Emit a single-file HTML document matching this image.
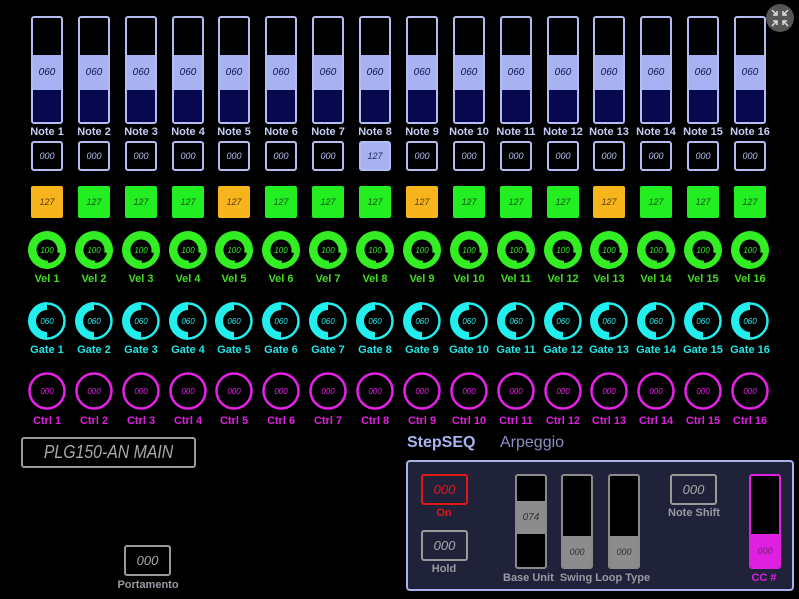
<!DOCTYPE html>
<html><head><meta charset="utf-8"><style>
*{margin:0;padding:0;box-sizing:border-box}
body{width:799px;height:599px;background:#000;position:relative;overflow:hidden;font-family:"Liberation Sans",sans-serif}
.c{position:absolute;top:0;width:32px;height:440px}
.sl{position:absolute;left:0;top:16px;width:32px;height:108px;border:2px solid #b4bcf0;border-radius:3px;background:#000;overflow:hidden}
.sl .b{position:absolute;left:0;top:37px;width:28px;height:35px;background:#a8b2f2;color:#10124a;font-style:italic;font-size:10px;text-align:center;line-height:35px}
.sl .n{position:absolute;left:0;top:72px;width:28px;height:34px;background:#07084e}
.lb{position:absolute;left:-20px;width:72px;text-align:center;font-weight:bold;font-size:11px}
.nl{top:126px;color:#c4ccf4}
.bx{position:absolute;left:0;top:141px;width:32px;height:30px;border:2px solid #b4bcf0;border-radius:3px;color:#b4bcf0;font-style:italic;font-size:9px;text-align:center;line-height:26px}
.bx.on{background:#a8b2f2;color:#20245a}
.sq{position:absolute;left:0;top:186px;width:32px;height:32px;border-radius:2px;background:#22ee22;color:#105010;font-style:italic;font-size:9px;text-align:center;line-height:32px}
.sq.o{background:#f8b41c;color:#5a3a00}
svg.k{position:absolute;left:-4px;width:40px;height:40px}
.v{top:230px}.g{top:301px}.t{top:371px}
.vl{top:273px;color:#44dd22}.gl{top:344px;color:#22e6e6}.tl{top:415px;color:#e020e0}
.lcd{position:absolute;border:2px solid #9a9a9a;border-radius:3px;color:#a8a8a8;font-style:italic;text-align:center}
.gl2{position:absolute;font-weight:bold;font-size:11px;color:#9a9aa4;text-align:center}
.vs{position:absolute;width:32px;height:95px;border:2px solid #8a8a8a;border-radius:3px;background:#000;overflow:hidden}
</style></head><body>
<svg width="0" height="0" style="position:absolute"><defs>
<g id="kv"><circle cx="20" cy="20" r="19" fill="#33ee22"/><circle cx="20" cy="20" r="10.5" fill="#000"/><path d="M20,20 L33,23 A13,13 0 0 1 21,33 Z" fill="#000"/><text x="20" y="23" font-size="8" font-style="italic" fill="#33ee22" text-anchor="middle" font-family="Liberation Sans">100</text></g>
<g id="kg"><circle cx="20" cy="20" r="17.5" fill="none" stroke="#22eeee" stroke-width="2.5"/><path d="M20,1 A19,19 0 0 0 20,39 L20,31 A11,11 0 0 1 20,9 Z" fill="#22eeee"/><text x="20" y="23" font-size="8" font-style="italic" fill="#22eeee" text-anchor="middle" font-family="Liberation Sans">060</text></g>
<g id="kc"><circle cx="20" cy="20" r="17.5" fill="none" stroke="#e820e8" stroke-width="2.5"/><text x="20" y="23" font-size="8" font-style="italic" fill="#e820e8" text-anchor="middle" font-family="Liberation Sans">000</text></g>
</defs></svg>

<div class="c" style="left:31px"><div class="sl"><div class="b">060</div><div class="n"></div></div><div class="lb nl">Note 1</div><div class="bx">000</div><div class="sq o">127</div><svg class="k v"><use href="#kv"/></svg><div class="lb vl">Vel 1</div><svg class="k g"><use href="#kg"/></svg><div class="lb gl">Gate 1</div><svg class="k t"><use href="#kc"/></svg><div class="lb tl">Ctrl 1</div></div>
<div class="c" style="left:78px"><div class="sl"><div class="b">060</div><div class="n"></div></div><div class="lb nl">Note 2</div><div class="bx">000</div><div class="sq">127</div><svg class="k v"><use href="#kv"/></svg><div class="lb vl">Vel 2</div><svg class="k g"><use href="#kg"/></svg><div class="lb gl">Gate 2</div><svg class="k t"><use href="#kc"/></svg><div class="lb tl">Ctrl 2</div></div>
<div class="c" style="left:125px"><div class="sl"><div class="b">060</div><div class="n"></div></div><div class="lb nl">Note 3</div><div class="bx">000</div><div class="sq">127</div><svg class="k v"><use href="#kv"/></svg><div class="lb vl">Vel 3</div><svg class="k g"><use href="#kg"/></svg><div class="lb gl">Gate 3</div><svg class="k t"><use href="#kc"/></svg><div class="lb tl">Ctrl 3</div></div>
<div class="c" style="left:172px"><div class="sl"><div class="b">060</div><div class="n"></div></div><div class="lb nl">Note 4</div><div class="bx">000</div><div class="sq">127</div><svg class="k v"><use href="#kv"/></svg><div class="lb vl">Vel 4</div><svg class="k g"><use href="#kg"/></svg><div class="lb gl">Gate 4</div><svg class="k t"><use href="#kc"/></svg><div class="lb tl">Ctrl 4</div></div>
<div class="c" style="left:218px"><div class="sl"><div class="b">060</div><div class="n"></div></div><div class="lb nl">Note 5</div><div class="bx">000</div><div class="sq o">127</div><svg class="k v"><use href="#kv"/></svg><div class="lb vl">Vel 5</div><svg class="k g"><use href="#kg"/></svg><div class="lb gl">Gate 5</div><svg class="k t"><use href="#kc"/></svg><div class="lb tl">Ctrl 5</div></div>
<div class="c" style="left:265px"><div class="sl"><div class="b">060</div><div class="n"></div></div><div class="lb nl">Note 6</div><div class="bx">000</div><div class="sq">127</div><svg class="k v"><use href="#kv"/></svg><div class="lb vl">Vel 6</div><svg class="k g"><use href="#kg"/></svg><div class="lb gl">Gate 6</div><svg class="k t"><use href="#kc"/></svg><div class="lb tl">Ctrl 6</div></div>
<div class="c" style="left:312px"><div class="sl"><div class="b">060</div><div class="n"></div></div><div class="lb nl">Note 7</div><div class="bx">000</div><div class="sq">127</div><svg class="k v"><use href="#kv"/></svg><div class="lb vl">Vel 7</div><svg class="k g"><use href="#kg"/></svg><div class="lb gl">Gate 7</div><svg class="k t"><use href="#kc"/></svg><div class="lb tl">Ctrl 7</div></div>
<div class="c" style="left:359px"><div class="sl"><div class="b">060</div><div class="n"></div></div><div class="lb nl">Note 8</div><div class="bx on">127</div><div class="sq">127</div><svg class="k v"><use href="#kv"/></svg><div class="lb vl">Vel 8</div><svg class="k g"><use href="#kg"/></svg><div class="lb gl">Gate 8</div><svg class="k t"><use href="#kc"/></svg><div class="lb tl">Ctrl 8</div></div>
<div class="c" style="left:406px"><div class="sl"><div class="b">060</div><div class="n"></div></div><div class="lb nl">Note 9</div><div class="bx">000</div><div class="sq o">127</div><svg class="k v"><use href="#kv"/></svg><div class="lb vl">Vel 9</div><svg class="k g"><use href="#kg"/></svg><div class="lb gl">Gate 9</div><svg class="k t"><use href="#kc"/></svg><div class="lb tl">Ctrl 9</div></div>
<div class="c" style="left:453px"><div class="sl"><div class="b">060</div><div class="n"></div></div><div class="lb nl">Note 10</div><div class="bx">000</div><div class="sq">127</div><svg class="k v"><use href="#kv"/></svg><div class="lb vl">Vel 10</div><svg class="k g"><use href="#kg"/></svg><div class="lb gl">Gate 10</div><svg class="k t"><use href="#kc"/></svg><div class="lb tl">Ctrl 10</div></div>
<div class="c" style="left:500px"><div class="sl"><div class="b">060</div><div class="n"></div></div><div class="lb nl">Note 11</div><div class="bx">000</div><div class="sq">127</div><svg class="k v"><use href="#kv"/></svg><div class="lb vl">Vel 11</div><svg class="k g"><use href="#kg"/></svg><div class="lb gl">Gate 11</div><svg class="k t"><use href="#kc"/></svg><div class="lb tl">Ctrl 11</div></div>
<div class="c" style="left:547px"><div class="sl"><div class="b">060</div><div class="n"></div></div><div class="lb nl">Note 12</div><div class="bx">000</div><div class="sq">127</div><svg class="k v"><use href="#kv"/></svg><div class="lb vl">Vel 12</div><svg class="k g"><use href="#kg"/></svg><div class="lb gl">Gate 12</div><svg class="k t"><use href="#kc"/></svg><div class="lb tl">Ctrl 12</div></div>
<div class="c" style="left:593px"><div class="sl"><div class="b">060</div><div class="n"></div></div><div class="lb nl">Note 13</div><div class="bx">000</div><div class="sq o">127</div><svg class="k v"><use href="#kv"/></svg><div class="lb vl">Vel 13</div><svg class="k g"><use href="#kg"/></svg><div class="lb gl">Gate 13</div><svg class="k t"><use href="#kc"/></svg><div class="lb tl">Ctrl 13</div></div>
<div class="c" style="left:640px"><div class="sl"><div class="b">060</div><div class="n"></div></div><div class="lb nl">Note 14</div><div class="bx">000</div><div class="sq">127</div><svg class="k v"><use href="#kv"/></svg><div class="lb vl">Vel 14</div><svg class="k g"><use href="#kg"/></svg><div class="lb gl">Gate 14</div><svg class="k t"><use href="#kc"/></svg><div class="lb tl">Ctrl 14</div></div>
<div class="c" style="left:687px"><div class="sl"><div class="b">060</div><div class="n"></div></div><div class="lb nl">Note 15</div><div class="bx">000</div><div class="sq">127</div><svg class="k v"><use href="#kv"/></svg><div class="lb vl">Vel 15</div><svg class="k g"><use href="#kg"/></svg><div class="lb gl">Gate 15</div><svg class="k t"><use href="#kc"/></svg><div class="lb tl">Ctrl 15</div></div>
<div class="c" style="left:734px"><div class="sl"><div class="b">060</div><div class="n"></div></div><div class="lb nl">Note 16</div><div class="bx">000</div><div class="sq">127</div><svg class="k v"><use href="#kv"/></svg><div class="lb vl">Vel 16</div><svg class="k g"><use href="#kg"/></svg><div class="lb gl">Gate 16</div><svg class="k t"><use href="#kc"/></svg><div class="lb tl">Ctrl 16</div></div>

<svg style="position:absolute;left:764px;top:2px" width="32" height="32"><circle cx="16" cy="16" r="14" fill="#555"/><g stroke="#ddd" stroke-width="1.5" fill="none"><path d="M8,8 L13,13 M13,9 V13 H9"/><path d="M24,8 L19,13 M19,9 V13 H23"/><path d="M8,24 L13,19 M13,23 V19 H9"/><path d="M24,24 L19,19 M19,23 V19 H23"/></g></svg>

<div class="lcd" style="left:21px;top:437px;width:175px;height:31px;font-size:18px;line-height:27px;overflow:hidden"><span style="display:inline-block;transform:scaleX(0.88);white-space:nowrap">PLG150-AN MAIN</span></div>
<div class="lcd" style="left:124px;top:545px;width:47px;height:31px;font-size:13px;line-height:27px">000</div>
<div class="gl2" style="left:108px;top:579px;width:80px">Portamento</div>

<div style="position:absolute;left:407px;top:434px;font-weight:bold;font-size:16px;color:#aab4f0">StepSEQ</div>
<div style="position:absolute;left:500px;top:434px;font-size:16px;color:#8890c4">Arpeggio</div>
<div style="position:absolute;left:406px;top:460px;width:388px;height:131px;background:#20223a;border:2px solid #aab2ec;border-radius:4px"></div>

<div class="lcd" style="left:421px;top:474px;width:47px;height:31px;font-size:13px;line-height:27px;border-color:#e01818;color:#e01818">000</div>
<div class="gl2" style="left:424px;top:507px;width:40px;color:#e01818">On</div>
<div class="lcd" style="left:421px;top:530px;width:47px;height:31px;font-size:13px;line-height:27px">000</div>
<div class="gl2" style="left:424px;top:563px;width:40px">Hold</div>

<div class="vs" style="left:515px;top:474px"><div style="position:absolute;top:25px;left:0;width:28px;height:33px;background:#8c8c8c;color:#333;font-style:italic;font-size:10px;text-align:center;line-height:33px">074</div></div>
<div class="vs" style="left:561px;top:474px"><div style="position:absolute;top:60px;left:0;width:28px;height:33px;background:#8c8c8c;color:#333;font-style:italic;font-size:9px;text-align:center;line-height:33px">000</div></div>
<div class="vs" style="left:608px;top:474px"><div style="position:absolute;top:60px;left:0;width:28px;height:33px;background:#8c8c8c;color:#333;font-style:italic;font-size:9px;text-align:center;line-height:33px">000</div></div>
<div class="gl2" style="left:503px;top:572px;width:160px;text-align:left">Base Unit &nbsp;Swing Loop Type</div>

<div class="lcd" style="left:670px;top:474px;width:47px;height:31px;font-size:13px;line-height:27px">000</div>
<div class="gl2" style="left:660px;top:507px;width:68px">Note Shift</div>

<div class="vs" style="left:749px;top:474px;border-color:#e020e0"><div style="position:absolute;top:58px;left:0;width:28px;height:35px;background:#e020e0;color:#702070;font-style:italic;font-size:9px;text-align:center;line-height:35px">000</div></div>
<div class="gl2" style="left:740px;top:572px;width:48px;color:#e020e0">CC #</div>
</body></html>
